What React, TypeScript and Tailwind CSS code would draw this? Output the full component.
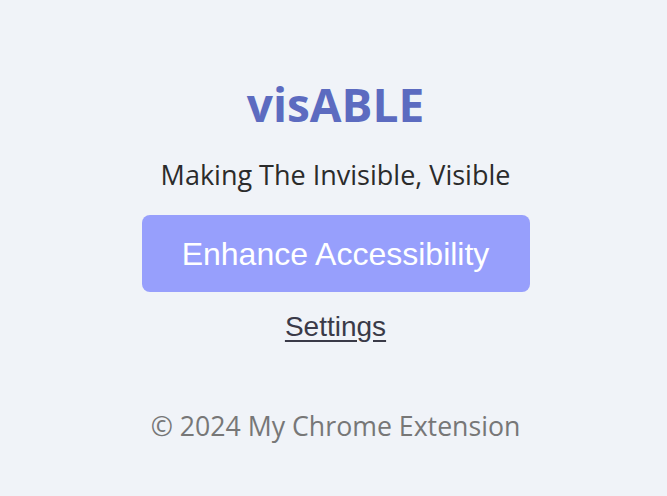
export default function App() {
  return (
    <div className="min-h-screen w-full bg-[#f0f3f8] flex flex-col items-center pt-[72px] pl-[4px] font-['Open_Sans',sans-serif]">
      <h1 className="text-[46px] leading-[64px] font-bold text-[#5c6bc0]">visABLE</h1>

      <p className="mt-[23px] text-[27px] leading-[32px] text-[#2b2b2b]">Making The Invisible, Visible</p>

      <button className="mt-[24px] w-[388px] h-[77px] rounded-[8px] bg-[#979ffc] text-white text-[32px] font-['Liberation_Sans',Arial,sans-serif]">
        Enhance Accessibility
      </button>

      <a
        href="#"
        className="mt-[19px] text-[28px] leading-[32px] text-[#3a3a48] underline underline-offset-[4px] font-['Liberation_Sans',Arial,sans-serif]"
      >
        Settings
      </a>

      <footer className="mt-[65px] text-[26.7px] leading-[36px] text-[#777777]">© 2024 My Chrome Extension</footer>
    </div>
  );
}
